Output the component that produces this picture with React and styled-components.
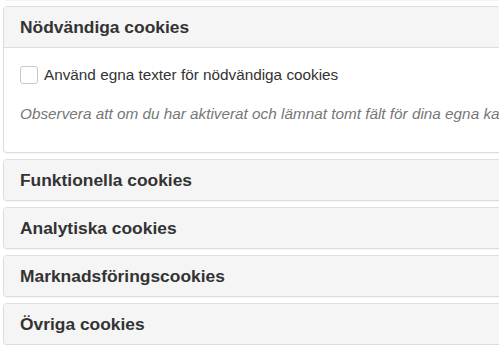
import React from "react";
import styled, { createGlobalStyle } from "styled-components";

const Global = createGlobalStyle`
  html, body { margin: 0; padding: 0; background: #fff; overflow: hidden; }
  body { font-family: "Liberation Sans", Arial, Helvetica, sans-serif; color: #333; }
`;

const Page = styled.div`
  width: 700px;
  padding-left: 3px;
  margin-top: -42px;
  display: flex;
  flex-direction: column;
  gap: 6px;
`;

const Panel = styled.div`
  border: 1px solid #ddd;
  border-radius: 4px;
  background: #fff;
  box-shadow: 0 1px 1px rgba(0, 0, 0, 0.05);
  overflow: hidden;
`;

const Header = styled.div`
  background: #f5f5f5;
  padding: 0 16px;
  height: 40px;
  display: flex;
  align-items: center;
  font-size: 17.4px;
  font-weight: bold;
  color: #333;
  border-bottom: ${(p) => (p.$open ? "1px solid #ddd" : "none")};
`;

const Body = styled.div`
  padding: 17px 16px 15px;
`;

const CheckRow = styled.label`
  display: flex;
  align-items: center;
  gap: 6px;
  height: 20px;
  font-size: 15.3px;
  color: #333;
`;

const Box = styled.span`
  width: 16px;
  height: 16px;
  border: 1px solid #c8c8c8;
  border-radius: 3px;
  background: #fff;
  flex: none;
`;

const Note = styled.p`
  margin: 19px 0 13px;
  line-height: 20px;
  font-size: 15.3px;
  font-style: italic;
  color: #777;
  white-space: nowrap;
`;

const sections = ["Funktionella cookies", "Analytiska cookies", "Marknadsföringscookies", "Övriga cookies"];

export default function App() {
  return (
    <>
      <Global />
      <Page>
        <Panel>
          <Header />
        </Panel>
        <Panel>
          <Header $open>Nödvändiga cookies</Header>
          <Body>
            <CheckRow>
              <Box />
              Använd egna texter för nödvändiga cookies
            </CheckRow>
            <Note>
              Observera att om du har aktiverat och lämnat tomt fält för dina egna kakor kommer standardtexten att användas.
            </Note>
          </Body>
        </Panel>
        {sections.map((s) => (
          <Panel key={s}>
            <Header>{s}</Header>
          </Panel>
        ))}
      </Page>
    </>
  );
}
